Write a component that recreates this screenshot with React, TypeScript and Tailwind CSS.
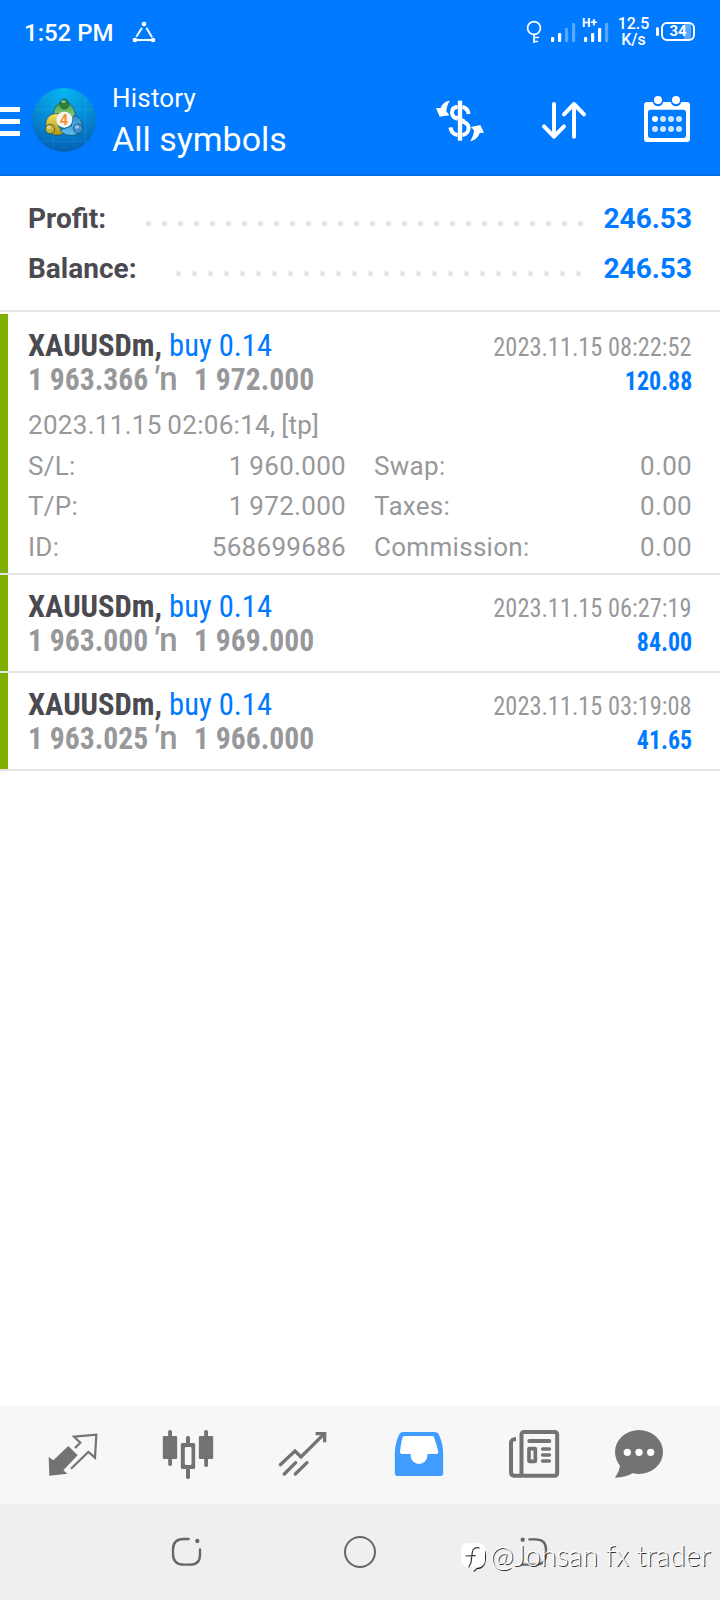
import type { ReactNode } from "react";

type Detail = { label: string; value: string };

type Deal = {
  symbol: string;
  side: string;
  open: string;
  close: string;
  time: string;
  profit: string;
  opened?: string;
  left?: Detail[];
  right?: Detail[];
};

const SUMMARY = [
  { label: "Profit:", value: "246.53", width: "w-[118px]", dots: 28 },
  { label: "Balance:", value: "246.53", width: "w-[148px]", dots: 26 },
];

const DEALS: Deal[] = [
  {
    symbol: "XAUUSDm,",
    side: "buy 0.14",
    open: "1 963.366",
    close: "1 972.000",
    time: "2023.11.15 08:22:52",
    profit: "120.88",
    opened: "2023.11.15 02:06:14, [tp]",
    left: [
      { label: "S/L:", value: "1 960.000" },
      { label: "T/P:", value: "1 972.000" },
      { label: "ID:", value: "568699686" },
    ],
    right: [
      { label: "Swap:", value: "0.00" },
      { label: "Taxes:", value: "0.00" },
      { label: "Commission:", value: "0.00" },
    ],
  },
  {
    symbol: "XAUUSDm,",
    side: "buy 0.14",
    open: "1 963.000",
    close: "1 969.000",
    time: "2023.11.15 06:27:19",
    profit: "84.00",
  },
  {
    symbol: "XAUUSDm,",
    side: "buy 0.14",
    open: "1 963.025",
    close: "1 966.000",
    time: "2023.11.15 03:19:08",
    profit: "41.65",
  },
];

function Signal({ bars, on }: { bars: number[]; on: number }) {
  return (
    <svg width="25" height="20" viewBox="0 0 25 20" fill="#fff">
      {bars.map((h, i) => (
        <rect key={i} x={i * 7} y={20 - h} width="3.2" height={h} rx="1" opacity={i < on ? 1 : 0.35} />
      ))}
    </svg>
  );
}

function StatusBar() {
  return (
    <div className="flex h-16 items-center pl-6 pr-[25px] text-white">
      <span className="w-[108px] pt-px text-[24px] font-medium leading-8">1:52 PM</span>
      <svg className="-mt-px" width="24" height="22" viewBox="0 0 72 66" fill="none" stroke="#fff" strokeWidth="6">
        <path d="M30 20 13 47M43 20l17 29M14 57h44" />
        <g fill="#fff" stroke="none">
          <circle cx="36" cy="9" r="7" />
          <circle cx="9" cy="57" r="7" />
          <circle cx="63" cy="57" r="7" />
        </g>
      </svg>
      <div className="ml-auto flex items-center">
        <svg className="mr-[9px]" width="16" height="24" viewBox="0 0 16 24" fill="none" stroke="#fff" strokeWidth="1.7">
          <circle cx="8" cy="8" r="6.4" />
          <path d="M8 14.4V23M8 17.5h5M8 21.5h4" />
        </svg>
        <Signal bars={[5, 9, 14, 19]} on={2} />
        <div className="relative ml-[8px] mr-[8px] flex">
          <Signal bars={[5, 9, 14, 19]} on={3} />
          <span className="absolute -left-[2px] -top-[5px] text-[12px] font-bold leading-3">H+</span>
        </div>
        <span className="w-[33px] text-center text-[16px] font-medium leading-[16px]">
          12.5
          <br />
          K/s
        </span>
        <div className="-mt-px ml-[6px] flex items-center gap-[2px]">
          <span className="h-[9px] w-[3px] rounded-full bg-white" />
          <span className="flex h-[19px] w-[34px] items-center justify-center rounded-[6px] border-2 border-white bg-[linear-gradient(to_right,transparent_21px,#59a9ff_21px,#59a9ff_28px,transparent_28px)] text-[15px] font-bold leading-none">
            34
          </span>
        </div>
      </div>
    </div>
  );
}

function AppLogo() {
  return (
    <svg width="64" height="64" viewBox="0 0 192 192">
      <defs>
        <radialGradient id="sky" cx="0.5" cy="0.05" r="0.95">
          <stop offset="0" stopColor="#06b4f2" />
          <stop offset="0.5" stopColor="#068fd8" />
          <stop offset="1" stopColor="#0560b4" />
        </radialGradient>
        <linearGradient id="green" x2="0" y2="1">
          <stop offset="0" stopColor="#3f9c44" />
          <stop offset="1" stopColor="#a5dd92" />
        </linearGradient>
        <linearGradient id="yellow" x2="0" y2="1">
          <stop offset="0" stopColor="#f1e35a" />
          <stop offset="1" stopColor="#a89513" />
        </linearGradient>
        <linearGradient id="blue" x2="0" y2="1">
          <stop offset="0" stopColor="#2f8fd0" />
          <stop offset="1" stopColor="#5cc0ee" />
        </linearGradient>
        <clipPath id="disc">
          <circle cx="96" cy="96" r="96" />
        </clipPath>
      </defs>
      <circle cx="96" cy="96" r="96" fill="url(#sky)" />
      <g clipPath="url(#disc)" stroke="#4cc0f5" strokeOpacity="0.3" strokeWidth="2">
        <path d="M0 64h192M0 160h192M64 0v192M160 0v192" />
        <path d="M0 32h192M0 96h192M0 128h192M32 0v192M96 0v192M128 0v192" strokeOpacity="0.1" />
      </g>
      <g stroke="#14425c" strokeWidth="2">
        <path d="M66 90C60 62 76 43 96 43s37 19 33 48l-13 8-20-24-22 18Z" fill="url(#green)" />
        <path d="M84 78C58 72 42 88 41 108c0 20 14 33 33 34 12 0 19-4 23-10l-17-16Z" fill="url(#yellow)" />
        <path d="M124 82c20 4 28 18 26 36-3 18-16 24-34 24-14 0-24-6-32-16l34-12Z" fill="url(#blue)" />
        <ellipse cx="97" cy="48" rx="13" ry="15" fill="#2f8433" />
        <circle cx="54" cy="123" r="14" fill="#c4b13a" />
        <circle cx="138" cy="122" r="14" fill="#3d8fd0" />
      </g>
      <g fill="#fff" fillOpacity="0.45">
        <ellipse cx="94" cy="41" rx="7" ry="4" />
        <ellipse cx="51" cy="118" rx="7" ry="5" />
        <ellipse cx="135" cy="117" rx="7" ry="5" />
      </g>
      <circle cx="97" cy="95" r="24" fill="#f4f4f4" />
      <text x="96" y="110" textAnchor="middle" fontSize="44" fontWeight="700" fill="#f59331" className="font-[Roboto]">
        4
      </text>
    </svg>
  );
}

function Header() {
  return (
    <div className="flex h-[112px] items-center border-b-2 border-[#0070e6] text-white">
      <div className="flex w-5 flex-col gap-[7px] pt-[5px]">
        <span className="h-[5px] bg-white" />
        <span className="h-[5px] bg-white" />
        <span className="h-[5px] bg-white" />
      </div>
      <div className="ml-3 pt-[2px]">
        <AppLogo />
      </div>
      <div className="ml-[16px] pt-[4px]">
        <div className="text-[26px] leading-[36px] tracking-[0.2px]">History</div>
        <div className="text-[34px] leading-[46px]">All symbols</div>
      </div>

      <div className="ml-auto flex items-center pr-[30px]">
        <svg className="mt-px" width="48" height="42" viewBox="0 0 144 126" fill="none" stroke="#fff">
          <path d="M72 5v120" strokeWidth="13" />
          <path d="M65 24C50 24 48 34 48 41s4 14 17 19M79 24c11 2 17 9 19 21M79 67c13 5 19 10 19 19s-6 20-19 22M65 108c-13-2-20-12-22-23" strokeWidth="12" />
          <path d="M60 53l26 13" strokeWidth="8" />
          <g fill="#fff" stroke="none">
            <path d="M42 5C27 7 18 15 14 27L0 27l11 26 29-4-9-12c1-13 4-23 11-32Z" />
            <path d="M103 126c15-2 24-11 28-24l13-1-11-23-28 6 9 10c-1 12-5 23-11 32Z" />
          </g>
        </svg>
        <svg className="ml-[57px] mt-px" width="46" height="42" viewBox="0 0 138 126" fill="none" stroke="#fff" strokeWidth="12" strokeLinecap="round" strokeLinejoin="round">
          <path d="M39 15v98M9 82l30 31 30-31M99 113V15M69 46l30-31 30 31" />
        </svg>
        <svg className="ml-[57px] mt-[2px]" width="46" height="48" viewBox="0 0 138 144">
          <rect y="18" width="138" height="120" rx="10" fill="#fff" />
          <rect x="12" y="41" width="114" height="85" rx="8" fill="#007aff" />
          <g fill="#007aff">
            <circle cx="42" cy="15" r="16" />
            <circle cx="96" cy="15" r="16" />
          </g>
          <g fill="#fff">
            <circle cx="42" cy="12" r="12" />
            <circle cx="96" cy="12" r="12" />
          </g>
          <g fill="#cce4ff">
            <circle cx="33" cy="69" r="9" fill="#fff" />
            <circle cx="57" cy="69" r="9" />
            <circle cx="81" cy="69" r="9" />
            <circle cx="105" cy="69" r="9" />
            <circle cx="33" cy="99" r="9" />
            <circle cx="57" cy="99" r="9" />
            <circle cx="81" cy="99" r="9" />
            <circle cx="105" cy="99" r="9" />
          </g>
        </svg>
      </div>
    </div>
  );
}

function Summary() {
  return (
    <div className="border-b-2 border-[#e4e4e4] pb-[16px] pl-7 pr-[28px] pt-[18px] text-[28px] font-bold leading-[50px]">
      {SUMMARY.map((row) => (
        <div key={row.label} className="flex h-[50px] items-center">
          <span className={`${row.width} text-[#4a4a50]`}>{row.label}</span>
          <span className="flex gap-[11px] pt-[8px]">
            {Array.from({ length: row.dots }, (_, i) => (
              <span key={i} className="size-[5px] rounded-full bg-[#e4e4e4]" />
            ))}
          </span>
          <span className="ml-auto text-[#007aff]">{row.value}</span>
        </div>
      ))}
    </div>
  );
}

function DetailColumn({ rows }: { rows: Detail[] }) {
  return (
    <div>
      {rows.map((row) => (
        <div key={row.label} className="flex justify-between">
          <span>{row.label}</span>
          <span>{row.value}</span>
        </div>
      ))}
    </div>
  );
}

function DealRow({ deal }: { deal: Deal }) {
  return (
    <div className="border-b-2 border-[#e4e4e4]">
      <div className="border-l-8 border-[#7fb000] pl-5 pr-7 text-[#97989b]">
        <div className="whitespace-nowrap pb-[14px] pt-[14px] font-stretch-75%">
          <div className="flex h-[34px] items-baseline justify-between leading-[34px]">
            <span className="origin-left scale-x-[0.956] text-[32px]">
              <span className="font-bold text-[#4a4a50]">{deal.symbol}</span>{" "}
              <span className="text-[#007aff]">{deal.side}</span>
            </span>
            <span className="origin-right scale-x-[0.937] text-[26px]">{deal.time}</span>
          </div>
          <div className="flex h-[34px] items-baseline font-bold leading-[34px]">
            <span className="w-[125px] origin-left scale-x-[0.925] text-[32px]">{deal.open}</span>
            <span className="w-[41px] text-[33px] font-medium font-stretch-100%">
              <i className="mr-[1px]">'</i>n
            </span>
            <span className="origin-left scale-x-[0.925] text-[32px]">{deal.close}</span>
            <span className="ml-auto origin-right scale-x-[0.92] text-[26px] text-[#007aff]">{deal.profit}</span>
          </div>
        </div>
        {deal.left && deal.right && (
          <div className="-mt-[5px] pb-[5.5px] text-[26px] leading-[40.5px] tracking-[0.3px] [word-spacing:-1px]">
            <div>{deal.opened}</div>
            <div className="grid grid-cols-[318px_318px] gap-7">
              <DetailColumn rows={deal.left} />
              <DetailColumn rows={deal.right} />
            </div>
          </div>
        )}
      </div>
    </div>
  );
}

function Tab({ children }: { children: ReactNode }) {
  return (
    <div className="flex w-[115.3px] shrink-0 justify-center last:w-[95px]">
      <svg width="56" height="56" viewBox="0 0 168 168" fill="none">
        {children}
      </svg>
    </div>
  );
}

function TabBar() {
  return (
    <div className="flex h-[98px] items-center bg-[#f7f7f7] pl-[15px]">
      <Tab>
        <path d="m11 90 14 10 45-43 28 28-43 45 12 10-54 6Z" fill="#737373" />
        <path d="m90 63 16-16-19-18 67-6-4 69-20-17-52 50" stroke="#737373" strokeWidth="6.5" />
      </Tab>
      <Tab>
        <g fill="#737373">
          <rect x="8.500" y="27" width="43" height="69" rx="4" />
          <rect x="24.500" y="9" width="11.500" height="108" rx="5" />
          <rect x="116.500" y="27" width="43" height="69" rx="4" />
          <rect x="132.500" y="9" width="11.500" height="111" rx="5" />
          <rect x="62.500" y="48" width="43" height="78" rx="4" />
          <rect x="78" y="27" width="12" height="129" rx="5" />
        </g>
        <rect x="74.500" y="60" width="20" height="54" rx="4" fill="#f7f7f7" />
      </Tab>
      <Tab>
        <g stroke="#737373" strokeWidth="10" strokeLinecap="round">
          <path d="m16 113 44-41 18 18 68-68" />
          <path d="M122 20h27v26" strokeLinecap="butt" />
          <path d="m28 141 34-34M61 141l35-34" />
        </g>
      </Tab>
      <Tab>
        <path
          fill="#409cff"
          d="M35 15h97q7 0 11 7 11 22 13.500 52v65q0 8-8 8H19.500q-8 0-8-8V74Q14 44 25 22q4-7 10-7Z"
        />
        <path fill="#fff" d="M41 27q-4 0-6 4-5 14-8 44 0 6 6 6h26v5a25 25 0 0 0 50 0v-5h27q6 0 6-5-4-22-13-45-2-4-6-4Z" />
      </Tab>
      <Tab>
        <g stroke="#737373" strokeWidth="12" strokeLinecap="round">
          <rect x="46.500" y="15" width="107" height="131" rx="7" />
          <path d="M30 36c-12 0-15 4-15 14v86q0 10 10 10h24" strokeLinecap="butt" />
          <path d="M70 42h60" />
          <rect x="69" y="65" width="19" height="38" rx="1" strokeWidth="11" />
          <path d="M110 66h20M110 84h20M110 102h20" strokeWidth="11" />
        </g>
      </Tab>
      <Tab>
        <path d="M20 108q7 4 7 10-3 18-15 34 32 0 58-16Z" fill="#737373" />
        <ellipse cx="84" cy="75" rx="72" ry="66" fill="#737373" />
        <g fill="#fff">
          <circle cx="49" cy="76" r="11" />
          <circle cx="84" cy="76" r="11" />
          <circle cx="119" cy="76" r="11" />
        </g>
      </Tab>
    </div>
  );
}

function SystemNav() {
  return (
    <div className="relative flex h-24 items-center bg-[#efefef] pl-[99px]">
      <div className="flex w-[174px] justify-center pr-px">
        <svg width="32" height="32" viewBox="0 0 96 96" fill="none" stroke="#666" strokeWidth="7" strokeLinecap="round">
          <path d="M56 9H42Q9 9 9 40v14q0 32 33 32h18q30 0 30-30V40" />
          <circle cx="82" cy="15" r="6.500" fill="#666" stroke="none" />
        </svg>
      </div>
      <div className="flex w-[174px] justify-center">
        <span className="size-8 rounded-full border-[2.5px] border-[#666]" />
      </div>
      <div className="flex w-[174px] justify-center">
        <svg width="32" height="32" viewBox="0 0 96 96" fill="none" stroke="#666" strokeWidth="7" strokeLinecap="round">
          <path d="M34 10h18q32 0 32 30v14q0 32-32 32H14" />
          <circle cx="14" cy="11" r="6.500" fill="#666" stroke="none" />
        </svg>
      </div>
      <div className="absolute left-[460px] top-[34px] flex items-start whitespace-nowrap">
        <svg className="mt-[2px]" width="30" height="34" viewBox="0 0 90 102" fill="none">
          <path d="M75 34q4 30-4 42-8 10-20 10l-10 9" stroke="#222" strokeWidth="3.500" />
          <rect x="3" y="9" width="72" height="72" rx="20" fill="#fff" />
          <path d="M59 24q-19-5-22 12l-4 32-7 14M17 48l30-1" stroke="#333" strokeWidth="3.500" />
        </svg>
        <span className="font-[Lato] text-[28.5px] font-light leading-[34px] text-white [text-shadow:1px_1px_0_#333]">
          @Jonsan fx trader
        </span>
      </div>
    </div>
  );
}

export default function App() {
  return (
    <div className="flex h-[1600px] w-[720px] flex-col overflow-hidden bg-white font-[Roboto,sans-serif]">
      <div className="bg-[#007aff]">
        <StatusBar />
        <Header />
      </div>
      <Summary />
      <div className="pt-[2px]">
        {DEALS.map((deal) => (
          <DealRow key={deal.time} deal={deal} />
        ))}
      </div>
      <div className="mt-auto">
        <TabBar />
        <SystemNav />
      </div>
    </div>
  );
}
